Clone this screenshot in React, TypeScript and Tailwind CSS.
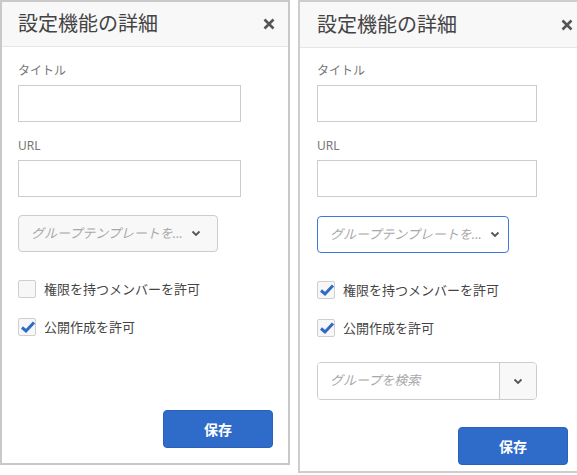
import React from "react";

const FONT = { fontFamily: '"Noto Sans", "Noto Sans CJK JP", sans-serif' };

function CloseIcon() {
  return (
    <svg width="12" height="12" viewBox="0 0 12 12">
      <path d="M1.5 1.5 L10.5 10.5 M10.5 1.5 L1.5 10.5" stroke="#555" strokeWidth="2.6" strokeLinecap="butt" />
    </svg>
  );
}

function Chevron() {
  return (
    <svg width="10" height="7" viewBox="0 0 10 7">
      <path d="M1.5 1.5 L5 5 L8.5 1.5" stroke="#555" strokeWidth="1.8" fill="none" />
    </svg>
  );
}

function Check({ checked }: { checked: boolean }) {
  return (
    <div className="relative w-[18px] h-[18px] shrink-0 border border-[#cfcfcf] bg-[#f7f7f7] rounded-[2px]">
      {checked && (
        <svg className="absolute left-[1px] top-[1px]" width="16" height="14" viewBox="0 0 16 14">
          <path d="M2 7.5 L6 11 L14 2.5" stroke="#2f6bc6" strokeWidth="3" fill="none" strokeLinejoin="miter" />
        </svg>
      )}
    </div>
  );
}

function Field({ label, mt, w }: { label: string; mt: string; w: string }) {
  return (
    <div className={mt}>
      <div className="h-[16px] text-[12px] leading-[16px] text-[#777]">{label}</div>
      <div className={`mt-[6px] ${w} h-[37px] border border-[#cccccc] bg-white`} />
    </div>
  );
}

function CheckRow({ checked, label, mt }: { checked: boolean; label: string; mt: string }) {
  return (
    <div className={`${mt} flex items-center gap-[8px]`}>
      <Check checked={checked} />
      <span className="text-[13px] leading-[18px] text-[#444]">{label}</span>
    </div>
  );
}

function SaveButton({ mb }: { mb: string }) {
  return (
    <div className={`mt-auto ${mb} flex justify-end`}>
      <div className="w-[110px] h-[38px] rounded-[4px] bg-[#2f6bc8] border border-[#2a62bb] flex items-center justify-center text-white font-bold text-[14px]">
        保存
      </div>
    </div>
  );
}

export default function App() {
  return (
    <div className="w-[577px] h-[475px] overflow-hidden bg-white flex items-start" style={FONT}>
      {/* Left panel */}
      <div className="w-[290px] h-[465px] shrink-0 border-2 border-[#c9c9c9] flex flex-col">
        <div className="h-[45px] shrink-0 bg-[#f8f8f8] border-b border-[#e6e6e6] flex items-center justify-between pl-4 pr-[13px]">
          <span className="text-[20px] text-[#444] leading-none">設定機能の詳細</span>
          <CloseIcon />
        </div>
        <div className="flex-1 flex flex-col pl-4 pr-[15px]">
          <Field label="タイトル" mt="mt-[16px]" w="w-[223px]" />
          <Field label="URL" mt="mt-[16px]" w="w-[223px]" />
          <div className="mt-[18px] w-[200px] h-[37px] border border-[#cccccc] rounded-[4px] bg-[#f8f8f8] flex items-center justify-between pl-[12px] pr-[16px]">
            <span className="text-[13px] italic text-[#a8a8a8]">グループテンプレートを...</span>
            <Chevron />
          </div>
          <CheckRow checked={false} label="権限を持つメンバーを許可" mt="mt-[28px]" />
          <CheckRow checked={true} label="公開作成を許可" mt="mt-[20px]" />
          <SaveButton mb="mb-[15px]" />
        </div>
      </div>

      {/* Right panel */}
      <div className="ml-[8px] w-[290px] h-[473px] shrink-0 border-2 border-[#cdcdcd] flex flex-col">
        <div className="h-[46px] shrink-0 bg-[#f8f8f8] border-b border-[#e6e6e6] flex items-center justify-between pl-[17px] pr-[13px]">
          <span className="text-[20px] text-[#444] leading-none">設定機能の詳細</span>
          <CloseIcon />
        </div>
        <div className="flex-1 flex flex-col pl-[17px] pr-[18px]">
          <Field label="タイトル" mt="mt-[15px]" w="w-[220px]" />
          <Field label="URL" mt="mt-[16px]" w="w-[220px]" />
          <div className="mt-[19px] w-[192px] h-[37px] border border-[#3b78d8] rounded-[4px] bg-white flex items-center justify-between pl-[12px] pr-[8px]">
            <span className="text-[13px] italic text-[#a8a8a8]">グループテンプレートを...</span>
            <Chevron />
          </div>
          <CheckRow checked={true} label="権限を持つメンバーを許可" mt="mt-[28px]" />
          <CheckRow checked={true} label="公開作成を許可" mt="mt-[20px]" />
          <div className="mt-[25px] w-[220px] h-[38px] border border-[#cccccc] rounded-[4px] flex overflow-hidden">
            <div className="flex-1 bg-white flex items-center pl-[12px]">
              <span className="text-[13px] italic text-[#a8a8a8]">グループを検索</span>
            </div>
            <div className="w-[37px] border-l border-[#cccccc] bg-[#f8f8f8] flex items-center justify-center">
              <Chevron />
            </div>
          </div>
          <SaveButton mb="mb-[6px]" />
        </div>
      </div>
    </div>
  );
}
